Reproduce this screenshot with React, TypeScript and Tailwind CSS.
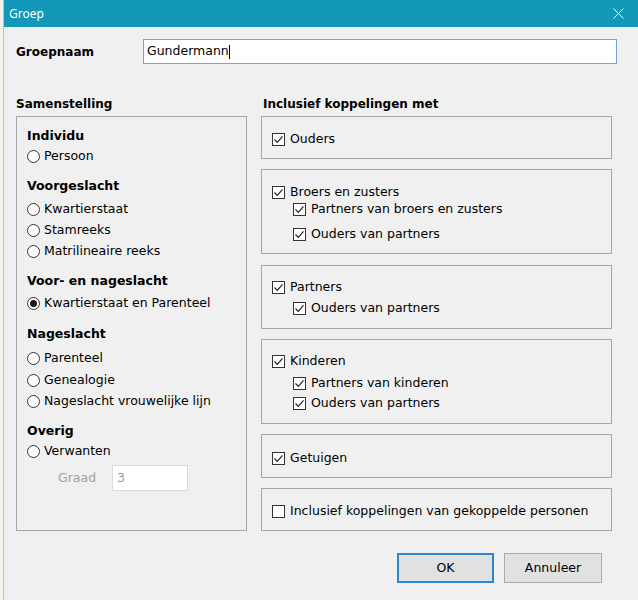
import React from 'react';

type LeftItem = { kind: 'head' | 'radio'; label: string; checked?: boolean; cls: string };
type Link = { label: string; level: 0 | 1; checked: boolean; cls: string };
type LinkBox = { cls: string; rows: Link[] };

const leftItems: LeftItem[] = [
  { kind: 'head', label: 'Individu', cls: 'mt-[9px]' },
  { kind: 'radio', label: 'Persoon', cls: '' },
  { kind: 'head', label: 'Voorgeslacht', cls: 'mt-[10px]' },
  { kind: 'radio', label: 'Kwartierstaat', cls: 'mt-[3px]' },
  { kind: 'radio', label: 'Stamreeks', cls: 'mt-[1px]' },
  { kind: 'radio', label: 'Matrilineaire reeks', cls: 'mt-[1px]' },
  { kind: 'head', label: 'Voor- en nageslacht', cls: 'mt-[10px]' },
  { kind: 'radio', label: 'Kwartierstaat en Parenteel', checked: true, cls: 'mt-[2px]' },
  { kind: 'head', label: 'Nageslacht', cls: 'mt-[11px]' },
  { kind: 'radio', label: 'Parenteel', cls: 'mt-[4px]' },
  { kind: 'radio', label: 'Genealogie', cls: 'mt-[2px]' },
  { kind: 'radio', label: 'Nageslacht vrouwelijke lijn', cls: 'mt-[1px]' },
  { kind: 'head', label: 'Overig', cls: 'mt-[10px]' },
  { kind: 'radio', label: 'Verwanten', cls: '' },
];

const linkBoxes: LinkBox[] = [
  {
    cls: 'h-[43px] pt-[14px]',
    rows: [{ label: 'Ouders', level: 0, checked: true, cls: '' }],
  },
  {
    cls: 'mt-[10px] h-[85px] pt-[14px]',
    rows: [
      { label: 'Broers en zusters', level: 0, checked: true, cls: '' },
      { label: 'Partners van broers en zusters', level: 1, checked: true, cls: '' },
      { label: 'Ouders van partners', level: 1, checked: true, cls: 'mt-[8px]' },
    ],
  },
  {
    cls: 'mt-[11px] h-[64px] pt-[13px]',
    rows: [
      { label: 'Partners', level: 0, checked: true, cls: '' },
      { label: 'Ouders van partners', level: 1, checked: true, cls: 'mt-[4px]' },
    ],
  },
  {
    cls: 'mt-[10px] h-[85px] pt-[13px]',
    rows: [
      { label: 'Kinderen', level: 0, checked: true, cls: '' },
      { label: 'Partners van kinderen', level: 1, checked: true, cls: 'mt-[5px]' },
      { label: 'Ouders van partners', level: 1, checked: true, cls: 'mt-[3px]' },
    ],
  },
  {
    cls: 'mt-[10px] h-[44px] pt-[15px]',
    rows: [{ label: 'Getuigen', level: 0, checked: true, cls: '' }],
  },
  {
    cls: 'mt-[10px] h-[43px] pt-[14px]',
    rows: [{ label: 'Inclusief koppelingen van gekoppelde personen', level: 0, checked: false, cls: '' }],
  },
];

const Radio: React.FC<{ checked?: boolean }> = ({ checked }) => (
  <span className="w-[13px] h-[13px] rounded-full border border-[#333] bg-white flex items-center justify-center shrink-0">
    {checked && <span className="w-[7px] h-[7px] rounded-full bg-[#1a1a1a]" />}
  </span>
);

const Check: React.FC<{ checked?: boolean }> = ({ checked }) => (
  <span className="w-[13px] h-[13px] border border-[#333] bg-white flex shrink-0">
    {checked && (
      <svg width="11" height="11" viewBox="0 0 11 11" fill="none">
        <path d="M1.5 5.5 L4.3 8.3 L9.5 2.3" stroke="#222" strokeWidth="1.2" />
      </svg>
    )}
  </span>
);

const App: React.FC = () => {
  return (
    <div className="flex w-[638px] h-[600px] overflow-hidden font-['DejaVu_Sans',sans-serif] text-[12.5px] text-black">
      {/* wat er achter het venster zichtbaar is */}
      <div className="w-[3px] bg-[#f4f4ec]" />
      <div className="w-[1px] bg-[#b7c6b9]" />

      <div className="flex-1 flex flex-col bg-[#f0f0f0]">
        <div className="h-[27px] bg-[#1398b9] flex items-center justify-between pl-[5px] pr-[14px]">
          <span className="text-white text-[12px] font-['Noto_Sans',sans-serif]">Groep</span>
          <svg width="11" height="11" viewBox="0 0 11 11">
            <path d="M0.5 0.5 L10.5 10.5 M10.5 0.5 L0.5 10.5" stroke="white" strokeWidth="1" />
          </svg>
        </div>

        <div className="pl-[12px] pt-[12px]">
          <div className="flex items-center h-[25px]">
            <span className="w-[127px] font-bold text-[12px]">Groepnaam</span>
            <div className="w-[474px] h-[25px] bg-white border border-[#76a5d8] flex items-center pl-[3px]">
              <span>Gundermann</span>
              <span className="w-[1px] h-[14px] bg-black" />
            </div>
          </div>

          <div className="flex mt-[32px]">
            <div className="w-[231px] flex flex-col">
              <div className="h-[16px] flex items-center font-bold text-[12px]">Samenstelling</div>
              <div className="mt-[4px] h-[415px] border border-[#a7a7a7] pl-[10px] flex flex-col">
                {leftItems.map((it, i) =>
                  it.kind === 'head' ? (
                    <div key={i} className={`h-[20px] flex items-center font-bold text-[12.5px] ${it.cls}`}>
                      {it.label}
                    </div>
                  ) : (
                    <div key={i} className={`h-[20px] flex items-center gap-[4px] ${it.cls}`}>
                      <Radio checked={it.checked} />
                      <span>{it.label}</span>
                    </div>
                  )
                )}
                <div className="mt-[4px] h-[26px] flex items-center pl-[31px]">
                  <span className="w-[54px] text-[#a2a2a2]">Graad</span>
                  <div className="w-[76px] h-[26px] bg-white border border-[#d9d9d9] flex items-center pl-[4px] text-[#9a9a9a]">
                    3
                  </div>
                </div>
              </div>
            </div>

            <div className="ml-[14px] w-[351px] flex flex-col">
              <div className="h-[16px] flex items-center font-bold text-[12px] pl-[2px]">Inclusief koppelingen met</div>
              <div className="mt-[4px] flex flex-col">
                {linkBoxes.map((box, i) => (
                  <div key={i} className={`border border-[#a7a7a7] pl-[10px] flex flex-col ${box.cls}`}>
                    {box.rows.map((r, j) => (
                      <div
                        key={j}
                        className={`h-[17px] flex items-center gap-[5px] ${r.level === 1 ? 'ml-[21px]' : ''} ${r.cls}`}
                      >
                        <Check checked={r.checked} />
                        <span>{r.label}</span>
                      </div>
                    ))}
                  </div>
                ))}
              </div>
            </div>
          </div>

          <div className="mt-[22px] flex justify-end gap-[10px] pr-[36px]">
            <button className="w-[97px] h-[30px] bg-[#e1e1e1] border-2 border-[#2d86d4] flex items-center justify-center">
              OK
            </button>
            <button className="w-[98px] h-[30px] bg-[#e1e1e1] border border-[#adadad] flex items-center justify-center">
              Annuleer
            </button>
          </div>
        </div>
      </div>
    </div>
  );
};

export default App;
